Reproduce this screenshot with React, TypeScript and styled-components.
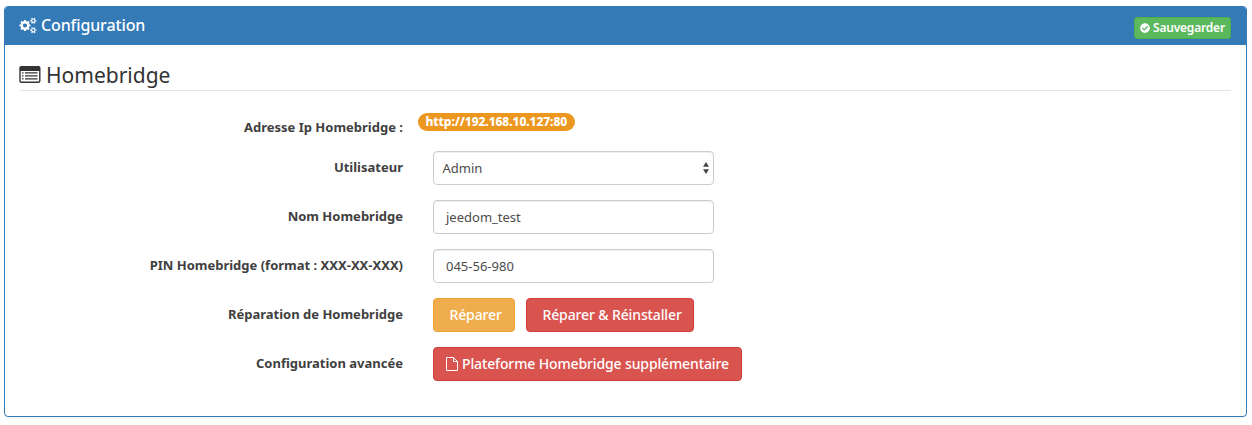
import React from "react";
import styled, { createGlobalStyle } from "styled-components";
import { FaCheckCircle } from "react-icons/fa";

const GlobalStyle = createGlobalStyle`
  * { box-sizing: border-box; }
  body {
    margin: 0;
    background: #fff;
    color: #333;
    font-family: "Noto Sans", sans-serif;
    font-size: 13px;
    line-height: 20px;
  }
  svg { flex: none; }
`;

const Page = styled.main`
  padding: 6px 5px 8px 4px;
`;

const Panel = styled.section`
  height: 411px;
  border: 1px solid #337ab7;
  border-radius: 4px;
  box-shadow: 0 1px 1px rgba(0, 0, 0, 0.05);
  overflow: hidden;
`;

const PanelHeading = styled.header`
  display: flex;
  justify-content: space-between;
  align-items: flex-start;
  height: 38px;
  padding: 8px 15px 0 14px;
  background: #337ab7;
  color: #fff;
`;

const PanelTitle = styled.h3`
  display: flex;
  align-items: center;
  gap: 4px;
  margin: 0;
  font-size: 16px;
  font-weight: 500;
  line-height: 20px;
  letter-spacing: -0.12px;
`;

const SaveButton = styled.button`
  display: flex;
  align-items: center;
  gap: 3px;
  height: 22px;
  width: 97px;
  margin-top: 2px;
  padding: 0 5px;
  border: 1px solid #4cae4c;
  border-radius: 3px;
  background: #5cb85c;
  color: #fff;
  font: 600 12px/18px "Noto Sans", sans-serif;
  letter-spacing: -0.2px;
  white-space: nowrap;
`;

const PanelBody = styled.div`
  padding: 15px 15px 0;
`;

const Legend = styled.h2`
  display: flex;
  align-items: center;
  gap: 5px;
  height: 31px;
  margin: 0 0 16px;
  border-bottom: 1px solid #e5e5e5;
  font-size: 21px;
  font-weight: 400;
  line-height: 30px;

  svg { margin-left: -1px; }
`;

const Row = styled.div<{ $compact?: boolean }>`
  display: grid;
  grid-template-columns: 383px 1fr;
  column-gap: ${(p) => (p.$compact ? 15 : 30)}px;
  height: ${(p) => (p.$compact ? 30 : 34)}px;
  margin-bottom: ${(p) => (p.$compact ? 14 : 15)}px;
`;

const Label = styled.label<{ $low?: boolean }>`
  padding-top: ${(p) => (p.$low ? 10 : 6)}px;
  text-align: right;
  font-weight: 700;
  color: #404040;
`;

const Badge = styled.span`
  display: inline-block;
  justify-self: start;
  width: 157px;
  height: 18px;
  margin-top: 6px;
  padding: 0 7.5px;
  border-radius: 9px;
  background: #ec971f;
  color: #fff;
  font-size: 12px;
  font-weight: 800;
  line-height: 17px;
  letter-spacing: -0.09px;
`;

const Field = styled.div<{ $select?: boolean }>`
  display: flex;
  align-items: center;
  justify-content: space-between;
  width: 281px;
  height: 34px;
  padding: 0 ${(p) => (p.$select ? "4px 0 8.500px" : "12px")};
  border: 1px solid #ccc;
  border-radius: 4px;
  background: #fff;
  box-shadow: inset 0 1px 1px rgba(0, 0, 0, 0.075);
  color: #4c4c4c;
`;

const Actions = styled.div`
  display: flex;
  gap: 11px;
`;

const tones = {
  warning: { fill: "#f0ad4e", edge: "#eea236" },
  danger: { fill: "#d9534f", edge: "#d43f3a" },
};

const Button = styled.button<{ $tone: keyof typeof tones; $width: number; $icon?: boolean }>`
  display: flex;
  align-items: center;
  gap: 4px;
  width: ${(p) => p.$width}px;
  height: 34px;
  padding: 0 0 0 ${(p) => (p.$icon ? 12 : 15.5)}px;
  border: 1px solid ${(p) => tones[p.$tone].edge};
  border-radius: 4px;
  background: ${(p) => tones[p.$tone].fill};
  color: #fff;
  font: 500 14px/20px "Noto Sans", sans-serif;
  letter-spacing: -0.13px;
  white-space: nowrap;
`;

const GearsIcon = () => (
  <svg width="18" height="17" viewBox="0 0 18 17" fill="none" stroke="currentColor">
    <circle cx="6" cy="8.500" r="3.300" strokeWidth="2.400" />
    <circle cx="6" cy="8.500" r="4.800" strokeWidth="1.600" pathLength="16" strokeDasharray="1 1" strokeDashoffset="0.5" />
    <circle cx="14.300" cy="3.700" r="1.700" strokeWidth="1.200" />
    <circle cx="14.300" cy="3.700" r="2.600" strokeWidth="1.100" pathLength="12" strokeDasharray="1 1" strokeDashoffset="0.5" />
    <circle cx="14.300" cy="13.200" r="1.700" strokeWidth="1.200" />
    <circle cx="14.300" cy="13.200" r="2.600" strokeWidth="1.100" pathLength="12" strokeDasharray="1 1" strokeDashoffset="0.5" />
  </svg>
);

const ListIcon = () => (
  <svg width="22" height="18" viewBox="0 0 22 18" fill="currentColor">
    <path fillRule="evenodd" d="M2.300 0h17A2.100 2.100 0 0 1 21.500 2.300v12.400a2.200 2.200 0 0 1-2.200 2.300H2.500A2.200 2.200 0 0 1 .3 14.700V2.300A2.200 2.200 0 0 1 2.300 0ZM1.700 5v9.700c0 .5.300.8.800.8h16.800c.5 0 .8-.3.800-.8V5Z" />
    <path d="M3 6.200h1.500v1.300H3zM6 6.200h12.500v1.300H6zM3 9.200h1.500v1.300H3zM6 9.200h12.500v1.300H6zM3 12.200h1.500v1.300H3zM6 12.200h12.500v1.300H6z" />
  </svg>
);

const FileIcon = () => (
  <svg width="12" height="14" viewBox="0 0 12 14" fill="none" stroke="currentColor" strokeLinejoin="round">
    <path d="M.5.5h7l4 4v9H.5zM7.500.5v4h4" />
  </svg>
);

const SelectArrows = () => (
  <svg width="6" height="12" viewBox="0 0 6 12" fill="#444">
    <path d="M3 0l3 4.800H0zM3 12l3-4.800H0z" />
  </svg>
);

export default function App() {
  return (
    <>
      <GlobalStyle />
      <Page>
        <Panel>
          <PanelHeading>
            <PanelTitle>
              <GearsIcon />
              Configuration
            </PanelTitle>
            <SaveButton>
              <FaCheckCircle size={10} />
              Sauvegarder
            </SaveButton>
          </PanelHeading>
          <PanelBody>
            <Legend>
              <ListIcon />
              Homebridge
            </Legend>
            <Row $compact>
              <Label $low>Adresse Ip Homebridge :</Label>
              <Badge>http://192.168.10.127:80</Badge>
            </Row>
            <Row>
              <Label>Utilisateur</Label>
              <Field $select>
                Admin
                <SelectArrows />
              </Field>
            </Row>
            <Row>
              <Label>Nom Homebridge</Label>
              <Field>jeedom_test</Field>
            </Row>
            <Row>
              <Label>PIN Homebridge (format : XXX-XX-XXX)</Label>
              <Field>045-56-980</Field>
            </Row>
            <Row>
              <Label>Réparation de Homebridge</Label>
              <Actions>
                <Button $tone="warning" $width={82}>Réparer</Button>
                <Button $tone="danger" $width={168}>Réparer &amp; Réinstaller</Button>
              </Actions>
            </Row>
            <Row>
              <Label>Configuration avancée</Label>
              <Actions>
                <Button $tone="danger" $width={309} $icon>
                  <FileIcon />
                  Plateforme Homebridge supplémentaire
                </Button>
              </Actions>
            </Row>
          </PanelBody>
        </Panel>
      </Page>
    </>
  );
}
